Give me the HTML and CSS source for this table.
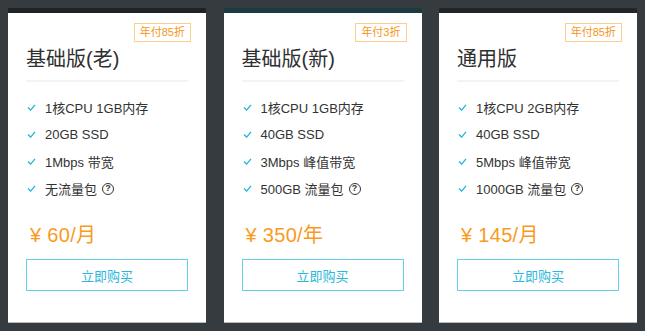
FILE: index.html
```html
<!DOCTYPE html>
<html lang="zh">
<head>
<meta charset="utf-8">
<link rel="stylesheet" href="styles.css">
</head>
<body>
<div class="plans">
  <div class="card card-a">
    <div class="badge-row"><span class="badge">年付85折</span></div>
    <h2 class="title">基础版(老)</h2>
    <ul class="features">
      <li><svg class="check" viewBox="0 0 10 8"><polyline points="1,4 4,7 9,1"/></svg>1核CPU 1GB内存</li>
      <li><svg class="check" viewBox="0 0 10 8"><polyline points="1,4 4,7 9,1"/></svg>20GB SSD</li>
      <li><svg class="check" viewBox="0 0 10 8"><polyline points="1,4 4,7 9,1"/></svg>1Mbps 带宽</li>
      <li><svg class="check" viewBox="0 0 10 8"><polyline points="1,4 4,7 9,1"/></svg>无流量包<span class="help">?</span></li>
    </ul>
    <div class="price">¥ 60/月</div>
    <button class="buy">立即购买</button>
  </div>
  <div class="card card-b">
    <div class="badge-row"><span class="badge">年付3折</span></div>
    <h2 class="title">基础版(新)</h2>
    <ul class="features">
      <li><svg class="check" viewBox="0 0 10 8"><polyline points="1,4 4,7 9,1"/></svg>1核CPU 1GB内存</li>
      <li><svg class="check" viewBox="0 0 10 8"><polyline points="1,4 4,7 9,1"/></svg>40GB SSD</li>
      <li><svg class="check" viewBox="0 0 10 8"><polyline points="1,4 4,7 9,1"/></svg>3Mbps 峰值带宽</li>
      <li><svg class="check" viewBox="0 0 10 8"><polyline points="1,4 4,7 9,1"/></svg>500GB 流量包<span class="help">?</span></li>
    </ul>
    <div class="price">¥ 350/年</div>
    <button class="buy">立即购买</button>
  </div>
  <div class="card card-c">
    <div class="badge-row"><span class="badge">年付85折</span></div>
    <h2 class="title">通用版</h2>
    <ul class="features">
      <li><svg class="check" viewBox="0 0 10 8"><polyline points="1,4 4,7 9,1"/></svg>1核CPU 2GB内存</li>
      <li><svg class="check" viewBox="0 0 10 8"><polyline points="1,4 4,7 9,1"/></svg>40GB SSD</li>
      <li><svg class="check" viewBox="0 0 10 8"><polyline points="1,4 4,7 9,1"/></svg>5Mbps 峰值带宽</li>
      <li><svg class="check" viewBox="0 0 10 8"><polyline points="1,4 4,7 9,1"/></svg>1000GB 流量包<span class="help">?</span></li>
    </ul>
    <div class="price">¥ 145/月</div>
    <button class="buy">立即购买</button>
  </div>
</div>
</body>
</html>
```
FILE: styles.css
```css
html, body {
  margin: 0;
  padding: 0;
  background: #353b3f;
  height: 100%;
}
body {
  font-family: "Liberation Sans", "Noto Sans CJK SC", sans-serif;
  color: #333;
}
.plans {
  display: flex;
  justify-content: space-between;
  padding: 8px 8px 0 8px;
}
.card {
  width: 198px;
  box-sizing: border-box;
  background: #fff;
  border-top: 5px solid #1f2326;
  border-bottom: 1px solid #b9bcbe;
  padding: 10px 18px 31px 18px;
  display: flex;
  flex-direction: column;
}
.card-b { border-top-color: #1c3a40; }
.card-c { border-top-color: #1f2528; }
.badge-row {
  display: flex;
  justify-content: flex-end;
  margin-right: -3px;
}
.badge {
  box-sizing: border-box;
  height: 19px;
  line-height: 17px;
  padding: 0 5px;
  border: 1px solid #fdcf8c;
  color: #f5961a;
  font-size: 11px;
}
.title {
  margin: 3px 0 0 0;
  font-size: 20px;
  font-weight: normal;
  line-height: 28px;
  color: #2f2f2f;
  padding-bottom: 7px;
  border-bottom: 2px solid #f3f3f3;
}
.features {
  list-style: none;
  margin: 12px 0 0 0;
  padding: 0 0 0 1px;
}
.features li {
  display: flex;
  align-items: center;
  height: 27px;
  font-size: 13px;
  color: #333;
}
.check {
  width: 9px;
  height: 7px;
  margin-right: 9px;
  fill: none;
  stroke: #22b5dc;
  stroke-width: 1.5;
}
.help {
  display: inline-flex;
  align-items: center;
  justify-content: center;
  box-sizing: border-box;
  width: 12px;
  height: 12px;
  margin-left: 5px;
  border: 1.2px solid #333;
  border-radius: 50%;
  font-size: 9px;
  font-weight: bold;
  line-height: 1;
  color: #333;
}
.price {
  margin-top: 19px;
  font-size: 20px;
  line-height: 28px;
  color: #f99a1e;
  padding-left: 4px;
  letter-spacing: 0.3px;
}
.buy {
  margin-top: 10px;
  height: 32px;
  width: 100%;
  background: #fff;
  border: 1px solid #62d0ea;
  color: #2cb7da;
  font-family: "Liberation Sans", "Noto Sans CJK SC", sans-serif;
  font-size: 13px;
  padding: 0;
}
```
